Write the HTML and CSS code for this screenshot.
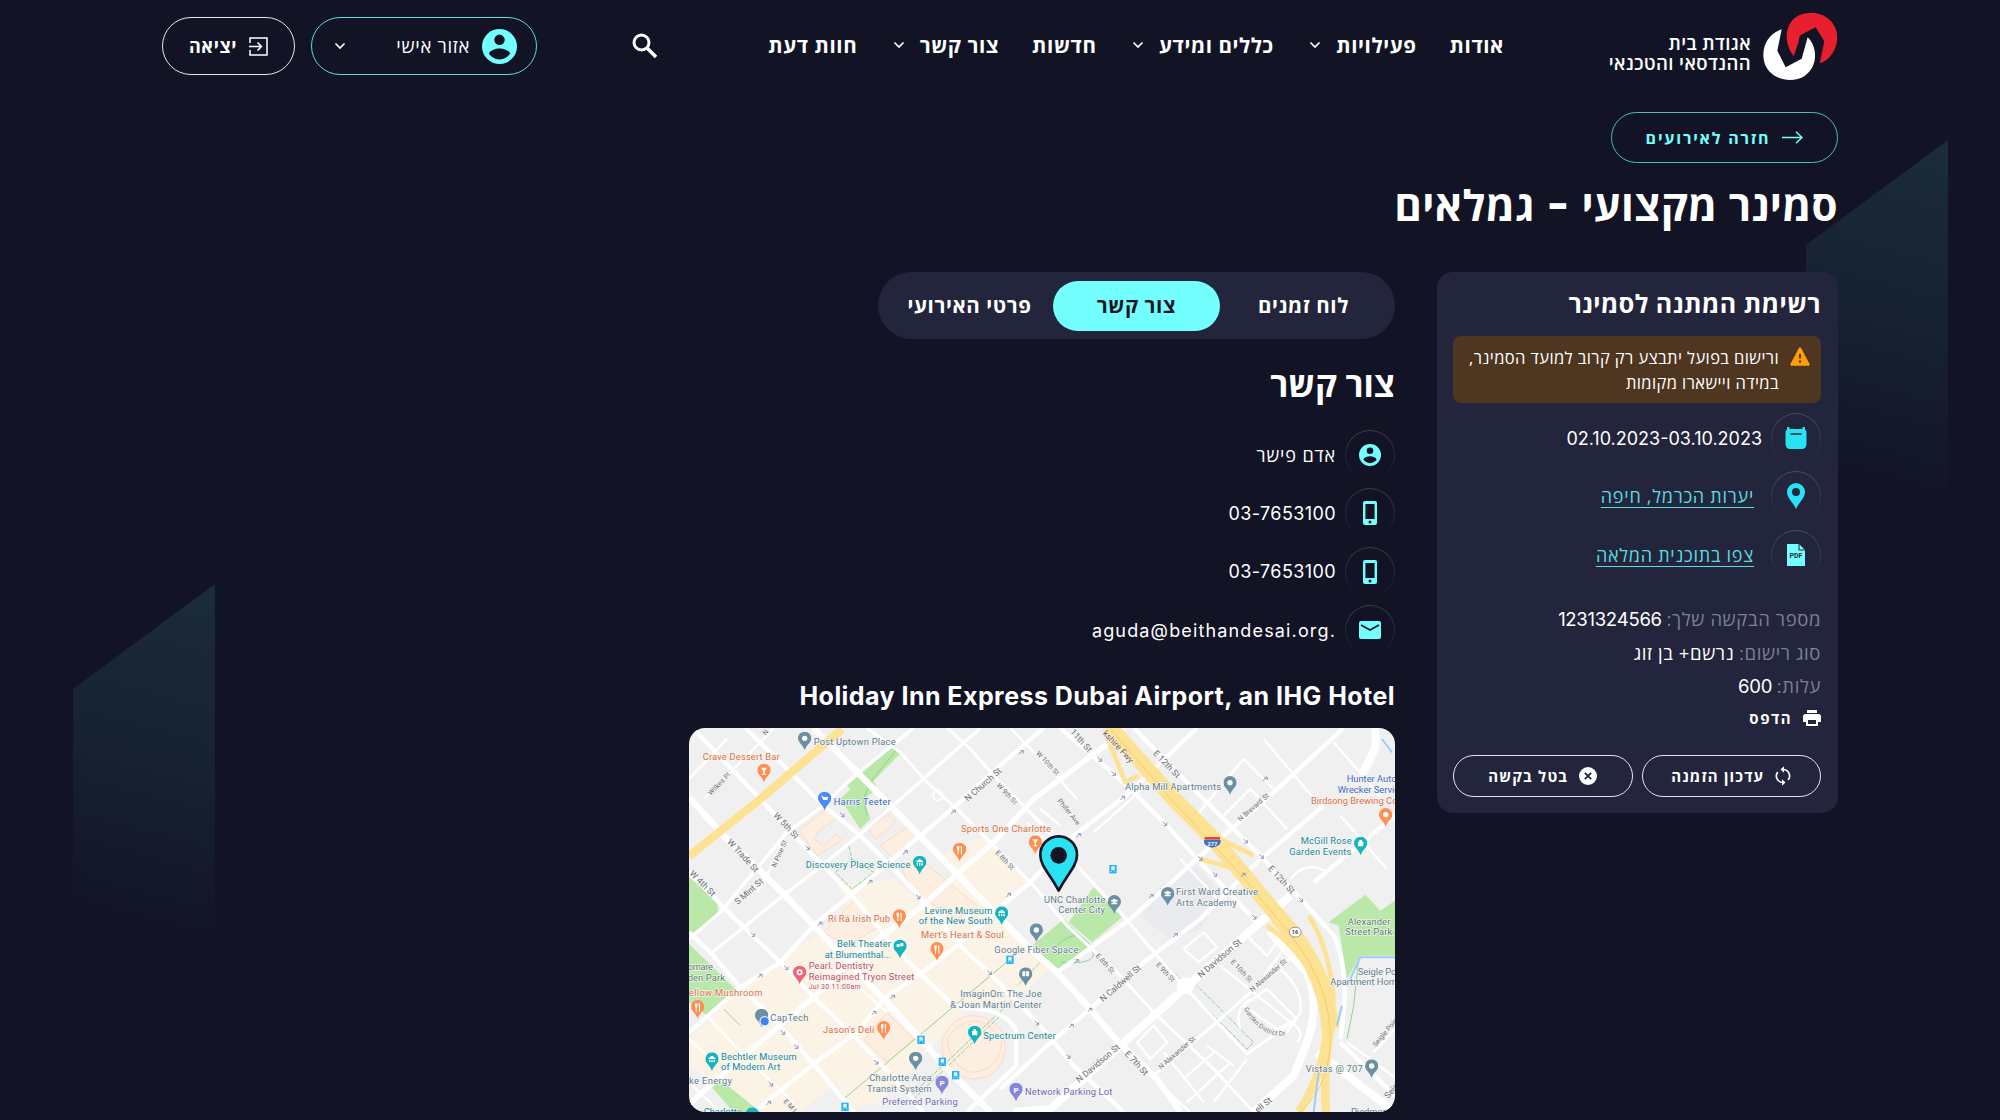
FILE: index.html
```html
<!DOCTYPE html>
<html lang="he" dir="rtl">
<head>
  <meta charset="UTF-8" />
  <title>סמינר מקצועי - גמלאים</title>
  <link rel="stylesheet" href="styles.css">
</head>
<body>

  <svg class="sprite" width="0" height="0">
    <symbol id="user" viewBox="2 2 20 20"><path fill-rule="evenodd" d="M12 2a10 10 0 1 0 0 20 10 10 0 0 0 0-20zm0 3.2a3 3 0 1 1 0 6 3 3 0 0 1 0-6zm0 14.2c-2.5 0-4.7-1.3-6-3.2.03-2 4-3.1 6-3.1s5.970 1.100 6 3.100c-1.300 1.900-3.500 3.200-6 3.200z"/></symbol>
    <symbol id="chev" viewBox="0 0 10 6"><path d="M1 1l4 4 4-4" fill="none" stroke="currentColor" stroke-width="1.7" stroke-linecap="round"/></symbol>
    <symbol id="phone" viewBox="0 0 14 24"><path fill-rule="evenodd" d="M2 0h10a2 2 0 0 1 2 2v20a2 2 0 0 1-2 2H2a2 2 0 0 1-2-2V2a2 2 0 0 1 2-2zm.4 3v15h9.200V3zM7 19.600a1.500 1.500 0 1 0 0 3 1.500 1.500 0 0 0 0-3z"/></symbol>
    <symbol id="pin" viewBox="0 0 40 56"><path d="M20 0a20 20 0 0 0-20 20c0 13 13 17 20 36 7-19 20-23 20-36A20 20 0 0 0 20 0z"/></symbol>
  </svg>

  <svg class="shape shape-right" viewBox="0 0 142 375">
    <defs>
      <linearGradient id="fade" x1="0.6" y1="0" x2="0.5" y2="1">
        <stop offset="0" stop-color="#1b2b38"/>
        <stop offset="0.45" stop-color="#172231"/>
        <stop offset="0.92" stop-color="#121426"/>
      </linearGradient>
    </defs>
    <path d="M0 105L142 0v375H0z" fill="url(#fade)"/>
  </svg>
  <svg class="shape shape-left" viewBox="0 0 142 375">
    <path d="M0 105L142 0v375H0z" fill="url(#fade)"/>
  </svg>

  <header class="header">
    <div class="logo">
      <svg width="75" height="69" viewBox="0 0 225 207">
        <path fill="#e71f2f" d="M170 154L184 88 158 46 111 70 104 98 92 132C60 92 64 32 108 10 150-10 205 8 220 55 230 95 210 142 170 154z"/>
        <path fill="#fff" d="M56 52L43 116 68 166 116 140 134 76C164 105 166 162 126 191 88 216 28 205 7 160-10 115 10 66 56 52z"/>
      </svg>
      <div class="logo-text">אגודת בית<br>ההנדסאי והטכנאי</div>
    </div>
    <nav class="nav">
      <a>אודות</a>
      <a>פעילויות <svg class="chev"><use href="#chev"/></svg></a>
      <a>כללים ומידע <svg class="chev"><use href="#chev"/></svg></a>
      <a>חדשות</a>
      <a>צור קשר <svg class="chev"><use href="#chev"/></svg></a>
      <a>חוות דעת</a>
    </nav>
    <svg class="search" width="26" height="26" viewBox="0 0 26 26" fill="none" stroke="#fff" stroke-width="3"><circle cx="9.500" cy="9.500" r="7.500"/><path d="M15 15l9 9" stroke-width="3.600"/></svg>
    <a class="account">
      <svg class="avatar"><use href="#user"/></svg>
      <span>אזור אישי</span>
      <svg class="chev"><use href="#chev"/></svg>
    </a>
    <a class="exit">
      <svg width="19" height="19" viewBox="0 0 19 19" fill="none" stroke="#fff" stroke-width="1.500"><path d="M1 6V1h17v17H1v-5M0 9.500h12M8.500 5.500l4 4-4 4"/></svg>
      <span>יציאה</span>
    </a>
  </header>

  <main class="page">
    <a class="back">
      <svg width="21" height="13" viewBox="0 0 21 13" fill="none" stroke="#73fffe" stroke-width="1.500"><path d="M0 6.500h20M14 .8l6 5.700-6 5.700"/></svg>
      <span>חזרה לאירועים</span>
    </a>
    <h1>סמינר מקצועי <span class="latin dash">-</span> גמלאים</h1>

    <div class="columns">
      <aside class="card">
        <h2>רשימת המתנה לסמינר</h2>
        <div class="warning">
          <svg width="20" height="19" viewBox="0 0 20 19"><path d="M10 1.500L18.500 17.500h-17z" fill="#ff9d0a" stroke="#ff9d0a" stroke-width="2.500" stroke-linejoin="round"/><path d="M10 7v4.500M10 13.500v2.200" stroke="#4e3620" stroke-width="2"/></svg>
          <p>ורישום בפועל יתבצע רק קרוב למועד הסמינר, במידה ויישארו מקומות</p>
        </div>
        <div class="row">
          <span class="circle"><svg width="22" height="22" viewBox="0 0 22 22"><path fill="#29e3f5" d="M2 0h2.500v2h13V0H20v2.500q1.500 1 1.500 3V17q0 5-5 5h-11q-5 0-5-5V5.500q0-2 1.500-3z"/><path d="M5.500 7h11" stroke="#22253b" stroke-width="1.500"/></svg></span>
          <bdi class="latin date">02.10.2023-03.10.2023</bdi>
        </div>
        <div class="row link">
          <span class="circle"><svg width="18" height="26" viewBox="0 0 18 26"><path fill="#29e3f5" fill-rule="evenodd" d="M9 0a9 9 0 0 0-9 9c0 6 6 10 9 17 3-7 9-11 9-17a9 9 0 0 0-9-9zm0 5a4 4 0 1 1 0 8 4 4 0 0 1 0-8z"/></svg></span>
          <a>יערות הכרמל, חיפה</a>
        </div>
        <div class="row link">
          <span class="circle"><svg width="18" height="22" viewBox="0 0 18 22"><path fill="#73fffe" d="M0 0h12l6 6v16H0z"/><path d="M12 0v6h6" fill="none" stroke="#22253b"/><text x="9" y="14" class="pdf">PDF</text></svg></span>
          <a>צפו בתוכנית המלאה</a>
        </div>
        <dl class="info">
          <div><dt>מספר הבקשה שלך:</dt> <dd class="latin">1231324566</dd></div>
          <div><dt>סוג רישום:</dt> <dd>נרשם+ בן זוג</dd></div>
          <div><dt>עלות:</dt> <dd class="latin">600</dd></div>
        </dl>
        <a class="print">
          <svg width="18" height="16" viewBox="0 0 18 16" fill="#fff"><path d="M4 0h10v3H4z"/><path fill-rule="evenodd" d="M2.500 4h13A2.500 2.500 0 0 1 18 6.500V12h-3v4H3v-4H0V6.500A2.500 2.500 0 0 1 2.500 4zM5 10v4h8v-4z"/></svg>
          <span>הדפס</span>
        </a>
        <div class="actions">
          <a><svg width="16" height="20" viewBox="0 0 16 20" fill="none" stroke="#fff" stroke-width="1.700"><path d="M8 3.500a6.500 6.500 0 0 1 5.200 10.500M8 16.500A6.500 6.500 0 0 1 2.800 6"/><path d="M9 .3v6.400L5.500 3.500zM7 13.300v6.400l3.500-3.200z" fill="#fff" stroke="none"/></svg><span>עדכון הזמנה</span></a>
          <a><svg width="18" height="18" viewBox="0 0 18 18"><circle cx="9" cy="9" r="9" fill="#fff"/><path d="M5.800 5.800l6.400 6.400M12.200 5.800l-6.400 6.400" stroke="#22253b" stroke-width="1.800"/></svg><span>בטל בקשה</span></a>
        </div>
      </aside>

      <section class="content">
        <div class="tabs">
          <a>לוח זמנים</a>
          <a class="active">צור קשר</a>
          <a>פרטי האירועי</a>
        </div>
        <h2>צור קשר</h2>
        <div class="contacts">
          <div class="row"><span class="circle"><svg width="22" height="22"><use href="#user"/></svg></span><span class="name">אדם פישר</span></div>
          <div class="row"><span class="circle"><svg width="14" height="24"><use href="#phone"/></svg></span><bdi class="latin tel">03-7653100</bdi></div>
          <div class="row"><span class="circle"><svg width="14" height="24"><use href="#phone"/></svg></span><bdi class="latin tel">03-7653100</bdi></div>
          <div class="row"><span class="circle"><svg width="22" height="18" viewBox="0 0 22 18"><rect width="22" height="18" rx="2"/><path d="M2 4l9 5 9-5" fill="none" stroke="#131527" stroke-width="1.800"/></svg></span><bdi class="latin mail" dir="ltr">aguda@beithandesai.org.</bdi></div>
        </div>
        <h3 dir="ltr">Holiday Inn Express Dubai Airport, an IHG Hotel</h3>

        <svg class="map" direction="ltr" viewBox="26 27 2118 1152">
          <rect x="26" y="27" width="2118" height="1152" fill="#f0f0f1"/>
          <!-- business areas -->
          <g fill="#fbf3e6">
            <path d="M790 400L900 355 950 385 1050 490 950 580 1040 690 1110 750 1000 850 850 880 600 1150 500 1170 470 1090 360 1179 240 1179 26 1040V960L180 810 330 700 420 640 560 500 700 570 830 465z"/>
            <path d="M470 500L640 480 830 640 700 760 560 640z"/>
          </g>
          <g fill="#fdeee2" stroke="#fbdcc4" stroke-width="3">
            <path d="M355 335L440 270 470 300 415 335 400 360 430 380 470 345 485 365 410 410z"/>
            <path d="M565 330L620 285 645 305 630 325 585 360z"/>
            <path d="M600 380L680 325 720 360 640 420z"/>
            <path d="M660 440L720 420 890 560 830 600 700 520z"/>
            <path d="M430 640L520 545 600 620 500 680z"/>
            <path d="M550 960L620 880 700 960 620 1030z"/>
            <circle cx="880" cy="985" r="95"/>
            <path d="M800 960q80-110 165 0-5 90-85 100-70-10-80-100z" fill="none"/>
          </g>
          <path d="M1440 500l110-60 70 80-60 110-90 30-90-70z" fill="#e9ebef"/>
          <!-- parks -->
          <g fill="#b9e8a8">
            <path d="M26 475L110 540 114 590 26 650z"/>
            <path d="M26 675L170 815 80 890 26 850z"/>
            <path d="M640 78L665 98 580 185 590 210 550 240 570 300 540 330 480 240 510 210 500 200z"/>
            <path d="M1240 505L1325 595 1235 670 1165 610z"/>
            <path d="M1150 600L1235 680 1130 760 1055 680z"/>
            <path d="M2055 527L2100 575 2144 545V710H2040L2000 780 1975 620 1945 610z"/>
            <path d="M90 1100L130 1090 240 1179H160z"/>
          </g>
          <g fill="none" stroke="#94d094" stroke-width="3">
            <path d="M505 380l10 40 65 40-65 50-50-50 50-40M1430 710l70 70M1530 820l170 170 20-20-170-170M670 1150l330-310M700 1140l260-250 M1090 720l-80 80" stroke-dasharray="14 4"/>
            <path d="M1130 680q60-60 100 0t-90 50M490 1140L990 720M2000 960l20-100 15-140"/>
            <path d="M650 90l-80 100-20 50 10 50M180 920l-50-50"/>
          </g>
          <!-- minor streets -->
          <g fill="none" stroke="#fff" stroke-width="7" stroke-linejoin="round">
            <path d="M26 180L140 60M70 240L250 60 280 27M990 27L1110 150 1190 240M1040 310l50 50M1060 290l60 50M1080 270l60 50M1240 340L1420 180"/>
            <path d="M1500 420l120 130M1630 290l80-80 110 120M1540 300l150-180 90 90M1750 60l160 190M1960 70L2100 230M1980 290l140 160M1830 480q50-60 110-20"/>
            <path d="M1510 690l60-50 40 45-55 45zM1370 970l50-50 40 50-50 50zM1700 650l60 60 30-40-30-30M1690 860l70-50 90 90-60 30zM1680 930q-20-60 30-90M1600 1000l-90 80M1450 1000l120 150M1520 1150l130-120"/>
            <path d="M1620 740L1830 910q50 30 20 60M1800 750q70 60 60 130l-40 60M1840 650l-90 120M1400 1060l130 120M1580 980l80 60M2000 970l150 110M2080 1000l64-70M620 880l-90-80"/>
            <path d="M320 330L270 450 230 520M26 1090L120 1179M80 890L200 1020 340 1150M26 960L80 1010M1600 1150L1700 1020"/>
          </g>
          <!-- streets -->
          <g fill="none" stroke="#fff" stroke-width="13" stroke-linejoin="round">
            <path d="M40 30L240 240 380 390 515 530 640 680 720 765 820 860 930 875Q1000 900 1008 940V1040L860 1179"/>
            <path d="M195 27L330 160 430 260 535 345 640 450 715 530 850 690 930 765 1070 910 1180 1040 1330 1179"/>
            <path d="M560 27L660 100 740 190 830 270 930 370 1060 500 1160 620 1310 760 1420 880 1600 1050 1720 1179" stroke-width="9"/>
            <path d="M800 27L870 90 950 180 1050 280 1190 440 1320 580 1430 710 1510 800 1700 1005 1850 900" stroke-width="9"/>
            <path d="M1140 27L1340 200 1460 320 1560 430 1740 620"/>
            <path d="M1360 27L1530 200 1660 330 1740 410 1880 560 1960 650Q1995 720 1993 850L1980 960"/>
            <path d="M26 460L165 600 300 730 400 835 530 960 680 1120 730 1179M26 640L90 700 180 805 290 910 400 1035 520 1179"/>
            <path d="M26 660L120 580 320 340 430 260 500 190 700 27M90 705L320 520 400 460 535 350 740 170 900 27" stroke-width="10"/>
            <path d="M26 940L180 805 300 730 410 610 515 525 720 350 820 265 970 130 1090 27"/>
            <path d="M26 1155L250 960 400 835 550 690 716 570 830 465 940 370 1060 240 1280 75 1330 27" stroke-width="16"/>
            <path d="M220 1179L400 1035 530 940 610 840 720 765 830 680 940 580 1050 490 1180 350 1330 235 1390 180 1550 27"/>
            <path d="M1130 760L1350 600 1440 520 1560 410 1780 220 1990 27M960 1110L1100 980 1230 870 1390 730 1560 600 1740 420 1930 260M1900 490L2144 290M1980 970L2144 1130" />
            <path d="M1420 1070L1620 900 1850 700" stroke-width="9"/>
          </g>
          <g fill="none" stroke="#fff" stroke-width="24" stroke-linejoin="round">
            <path d="M26 235L130 350 310 525 420 640 610 840 720 960 830 1080 930 1179M400 27L610 240 830 465 1050 690 1125 755 1230 870 1310 965 1430 1080 1500 1179" stroke-width="19"/>
            <path d="M1000 1179L1110 1170 1320 980 1510 810 1740 610 1830 530M1720 1179L1840 1070 1880 970Q1920 860 1880 760L1770 640M1910 1000L2144 1179M2085 27v60l-40 80" />
            <circle cx="1515" cy="800" r="14"/>
          </g>
          <!-- highways -->
          <g fill="none" stroke="#fde293" stroke-linejoin="round">
            <path d="M26 412L240 240 485 30" stroke-width="25"/>
            <path d="M1285 20L1480 240 1590 350 1680 455 1800 600" stroke-width="48"/>
            <path d="M1790 590Q1940 750 1949 930" stroke-width="52"/>
            <path d="M1940 900Q1940 1050 1855 1179M1955 900Q1925 1060 1938 1179" stroke-width="25"/>
            <path d="M1760 620Q1870 700 1920 820M1885 590Q1950 690 1960 850M1275 40l60 150 40-20M1340 60l60 70M1600 350l120 60M1560 420l90 25" stroke-width="14"/>
          </g>
          <path d="M1290 30L1480 250 1680 465 1800 610Q1940 770 1949 930T1860 1179" fill="none" stroke="#f5ce68" stroke-width="3"/>
          <path d="M2144 715H2040L2000 800M1985 860l-15 60M1915 1060l-15 119M2105 60l30 40" fill="none" stroke="#9ccdfb" stroke-width="6"/>
          <circle cx="773" cy="229" r="15" fill="none" stroke="#fff" stroke-width="5"/>

          <!-- street names -->
          <g class="street">
            <text transform="translate(92 230) rotate(-46)" font-size="21">Wilkes Pl</text>
            <text transform="translate(278 290) rotate(47)">W 5th St</text>
            <text transform="translate(139 370) rotate(47)">W Trade St</text>
            <text transform="translate(26 465) rotate(45)">W 4th St</text>
            <text transform="translate(172 558) rotate(-41)">S Mint St</text>
            <text transform="translate(286 446) rotate(-66)" font-size="21">N Pine St</text>
            <text transform="translate(862 248) rotate(-41)">N Church St</text>
            <text transform="translate(948 200) rotate(47)" font-size="21">W 9th St</text>
            <text transform="translate(1066 104) rotate(47)" font-size="21">W 10th St</text>
            <text transform="translate(944 402) rotate(47)" font-size="21">E 8th St</text>
            <text transform="translate(1130 246) rotate(51)" font-size="21">Phifer Ave</text>
            <text transform="translate(1168 40) rotate(48)">11th St</text>
            <text transform="translate(1417 104) rotate(46)">E 12th St</text>
            <text transform="translate(1762 450) rotate(47)">E 12th St</text>
            <text transform="translate(1266 44) rotate(47)" fill="#7a5230">kshire Fwy</text>
            <text transform="translate(1680 308) rotate(-41)" font-size="21">N Brevard St</text>
            <text transform="translate(1245 712) rotate(47)" font-size="21">E 8th St</text>
            <text transform="translate(1426 738) rotate(47)" font-size="21">E 9th St</text>
            <text transform="translate(1650 730) rotate(47)" font-size="21">E 10th St</text>
            <text transform="translate(1268 850) rotate(-41)">N Caldwell St</text>
            <text transform="translate(1562 778) rotate(-41)">N Davidson St</text>
            <text transform="translate(1196 1092) rotate(-40)">N Davidson St</text>
            <text transform="translate(1716 820) rotate(-41)" font-size="21">N Alexander St</text>
            <text transform="translate(1442 1052) rotate(-41)" font-size="21">N Alexander St</text>
            <text transform="translate(1332 1006) rotate(47)">E 7th St</text>
            <path id="garden" d="M1690 870Q1750 970 1835 945" fill="none" stroke="none"/>
            <text font-size="20"><textPath href="#garden">Garden District Dr</textPath></text>
            <text transform="translate(2086 985) rotate(-50)" font-size="21">Seigle Point</text>
            <text transform="translate(2124 1140) rotate(-50)">Seigle</text>
            <text transform="translate(1732 1182) rotate(-38)">ell St</text>
            <text transform="translate(308 1148) rotate(47)" font-size="21">E M L</text>
            <text transform="translate(256 50) rotate(-50)" font-size="21">N</text>
          </g>

          <!-- places -->
          <g class="place">
            <g fill="#5f7d8f">
              <text x="400" y="77" textLength="246">Post Uptown Place</text>
              <text x="1334" y="212" textLength="288">Alpha Mill Apartments</text>
              <text x="1091" y="551" textLength="184">UNC Charlotte</text>
              <text x="1134" y="583" textLength="140">Center City</text>
              <text x="1487" y="528" textLength="246">First Ward Creative</text>
              <text x="1487" y="560" textLength="182">Arts Academy</text>
              <text x="942" y="702" textLength="252">Google Fiber Space</text>
              <text x="840" y="834" textLength="244">ImaginOn: The Joe</text>
              <text x="810" y="866" textLength="274">&amp; Joan Martin Center</text>
              <text x="270" y="907" textLength="114">CapTech</text>
              <text x="26" y="1095" textLength="129">ke Energy</text>
              <text x="567" y="1086" textLength="187">Charlotte Area</text>
              <text x="560" y="1118" textLength="194">Transit System</text>
              <text x="2032" y="767">Seigle Point</text>
              <text x="1950" y="799">Apartment Homes</text>
              <text x="1876" y="1059" textLength="171">Vistas @ 707</text>
              <text x="2012" y="1188">Piedmont</text>
            </g>
            <g fill="#4f7f5c">
              <text x="22" y="753" textLength="76">omare</text>
              <text x="22" y="785" textLength="112">den Park</text>
              <text x="2002" y="617" textLength="128">Alexander</text>
              <text x="1995" y="649" textLength="141">Street Park</text>
            </g>
            <g fill="#df6f42">
              <text x="67" y="122" textLength="231">Crave Dessert Bar</text>
              <text x="842" y="338" textLength="270">Sports One Charlotte</text>
              <text x="443" y="609" textLength="187">Rí Rá Irish Pub</text>
              <text x="722" y="658" textLength="248">Mert's Heart &amp; Soul</text>
              <text x="26" y="831" textLength="220">ellow Mushroom</text>
              <text x="428" y="943" textLength="154">Jason's Deli</text>
              <text x="1892" y="255">Birdsong Brewing Co</text>
            </g>
            <g fill="#168b95">
              <text x="376" y="447" textLength="314">Discovery Place Science</text>
              <text x="733" y="584" textLength="203">Levine Museum</text>
              <text x="715" y="616" textLength="222">of the New South</text>
              <text x="470" y="684" textLength="162">Belk Theater</text>
              <text x="433" y="716" textLength="199">at Blumenthal...</text>
              <text x="122" y="1022" textLength="227">Bechtler Museum</text>
              <text x="122" y="1054" textLength="178">of Modern Art</text>
              <text x="909" y="960" textLength="217">Spectrum Center</text>
              <text x="1861" y="376" textLength="153">McGill Rose</text>
              <text x="1827" y="408" textLength="186">Garden Events</text>
              <text x="70" y="1188">Charlotte</text>
            </g>
            <g fill="#3b67c4">
              <text x="460" y="257" textLength="171">Harris Teeter</text>
              <text x="1999" y="190">Hunter Auto</text>
              <text x="1972" y="222">Wrecker Service</text>
            </g>
            <g fill="#c4506a">
              <text x="385" y="751" textLength="195">Pearl. Dentistry</text>
              <text x="385" y="783" textLength="317">Reimagined Tryon Street</text>
              <text x="385" y="809" font-size="21" textLength="156">Jul 30 11:00am</text>
            </g>
            <g fill="#6d6bb8">
              <text x="606" y="1158" textLength="226">Preferred Parking</text>
              <text x="1034" y="1129" textLength="262">Network Parking Lot</text>
            </g>
          </g>

          <!-- place pins -->
          <g fill="#6b8fa3">
            <use href="#pin" x="353" y="38" width="40" height="56"/>
            <use href="#pin" x="1629" y="171" width="40" height="56"/>
            <use href="#pin" x="1442" y="504" width="40" height="56"/>
            <use href="#pin" x="1282" y="528" width="40" height="56"/>
            <use href="#pin" x="1048" y="613" width="40" height="56"/>
            <use href="#pin" x="1016" y="745" width="40" height="56"/>
            <use href="#pin" x="224" y="869" width="40" height="56"/>
            <use href="#pin" x="686" y="998" width="40" height="56"/>
            <use href="#pin" x="2054" y="1021" width="40" height="56"/>
          </g>
          <g fill="#ff8f50">
            <use href="#pin" x="231" y="134" width="40" height="56"/>
            <use href="#pin" x="818" y="371" width="40" height="56"/>
            <use href="#pin" x="1045" y="349" width="40" height="56"/>
            <use href="#pin" x="637" y="571" width="40" height="56"/>
            <use href="#pin" x="750" y="669" width="40" height="56"/>
            <use href="#pin" x="32" y="843" width="40" height="56"/>
            <use href="#pin" x="590" y="906" width="40" height="56"/>
            <use href="#pin" x="2096" y="267" width="40" height="56"/>
          </g>
          <g fill="#12b5c0">
            <use href="#pin" x="698" y="410" width="40" height="56"/>
            <use href="#pin" x="944" y="562" width="40" height="56"/>
            <use href="#pin" x="639" y="662" width="40" height="56"/>
            <use href="#pin" x="75" y="1000" width="40" height="56"/>
            <use href="#pin" x="863" y="920" width="40" height="56"/>
            <use href="#pin" x="2021" y="353" width="40" height="56"/>
            <use href="#pin" x="196" y="1165" width="40" height="56"/>
          </g>
          <use href="#pin" x="413" y="218" width="40" height="56" fill="#4a8df6"/>
          <use href="#pin" x="338" y="740" width="40" height="56" fill="#f0647a"/>
          <g fill="#8486dc">
            <use href="#pin" x="765" y="1070" width="40" height="56"/>
            <use href="#pin" x="987" y="1091" width="40" height="56"/>
          </g>
          <g fill="#fff">
            <circle cx="373" cy="58" r="8"/><circle cx="1649" cy="191" r="8"/><circle cx="1068" cy="633" r="8"/><circle cx="706" cy="1018" r="8"/><circle cx="2074" cy="1041" r="8"/><circle cx="2116" cy="287" r="8"/>
            <path d="M1450 521l12-6 12 6-12 6zM1453 527h18v5h-18zM1290 545l12-6 12 6-12 6zM1293 551h18v5h-18zM1026 757h9v15h-9zM1037 757h9v15h-9z"/>
            <path d="M242 146h18l-7 9v9h4v3h-12v-3h4v-9zM1056 361h18l-7 9v9h4v3h-12v-3h4v-9z"/>
            <path id="fork" d="M830 381h7v10l-2 3v12h-3v-12l-2-3zM841 381h4v25h-3z"/>
            <use href="#fork" x="-181" y="200"/><use href="#fork" x="-68" y="298"/><use href="#fork" x="-786" y="472"/><use href="#fork" x="-228" y="535"/>
            <path id="museum" d="M708 427l10-7 10 7v3h-20zM709 432h4v8h-4zM716 432h4v8h-4zM723 432h4v8h-4z"/>
            <use href="#museum" x="246" y="152"/><use href="#museum" x="-623" y="590"/>
            <path d="M649 675h9v9h-9zM660 672h9v10h-9zM875 936h16v13h-16zM879 931h8v5h-8zM2033 368h16v14h-16zM2037 363h8v5h-8zM423 230h4l2 4h15l-3 9h-12z"/>
            <circle cx="358" cy="760" r="9"/>
          </g>
          <path d="M358 755v10M353 760h10" stroke="#f0647a" stroke-width="3"/>
          <text x="785" y="1100" class="parking">P</text>
          <text x="1007" y="1121" class="parking">P</text>
          <circle cx="253" cy="907" r="14" fill="#3b82f6" stroke="#e5edfb" stroke-width="4"/>
          <!-- tram stops -->
          <g fill="#1fb3f5">
            <path id="stop" d="M1287 438h22v25h-22z"/>
            <use href="#stop" x="-309" y="272"/><use href="#stop" x="-576" y="512"/><use href="#stop" x="-512" y="578"/><use href="#stop" x="-472" y="618"/><use href="#stop" x="-804" y="713"/>
          </g>
          <g stroke="#fff" stroke-width="2" fill="#d6f1fd">
            <path id="tram" d="M1294 443h8v9h-8zM1294 455l-2 4M1302 455l2 4"/>
            <use href="#tram" x="-309" y="272"/><use href="#tram" x="-576" y="512"/><use href="#tram" x="-512" y="578"/><use href="#tram" x="-472" y="618"/><use href="#tram" x="-804" y="713"/>
          </g>
          <!-- one-way arrows -->
          <g fill="none" stroke="#9391bd" stroke-width="3">
            <path id="ne" d="M668 405l12-10m-8 0h9v8"/>
            <use href="#ne" x="-106" y="89"/><use href="#ne" x="144" y="-121"/><use href="#ne" x="348" y="-300"/><use href="#ne" x="310" y="128"/><use href="#ne" x="520" y="-51"/><use href="#ne" x="652" y="-163"/><use href="#ne" x="1080" y="-220"/><use href="#ne" x="738" y="132"/><use href="#ne" x="1014" y="68"/><use href="#ne" x="-436" y="371"/><use href="#ne" x="-38" y="434"/><use href="#ne" x="-94" y="482"/><use href="#ne" x="810" y="249"/><use href="#ne" x="514" y="327"/><use href="#ne" x="554" y="473"/><use href="#ne" x="498" y="521"/><use href="#ne" x="-410" y="752"/><use href="#ne" x="-256" y="215"/>
            <path id="se" d="M375 380l12 11m-9 1h9v-9"/>
            <use href="#se" x="104" y="-99"/><use href="#se" x="332" y="147"/><use href="#se" x="876" y="-265"/><use href="#se" x="918" y="-223"/><use href="#se" x="1072" y="-72"/><use href="#se" x="1178" y="32"/><use href="#se" x="1222" y="80"/><use href="#se" x="1340" y="208"/><use href="#se" x="1314" y="-20"/><use href="#se" x="1362" y="26"/><use href="#se" x="1480" y="156"/><use href="#se" x="-64" y="360"/><use href="#se" x="-164" y="260"/><use href="#se" x="-74" y="554"/><use href="#se" x="-34" y="596"/><use href="#se" x="206" y="643"/><use href="#se" x="546" y="375"/><use href="#se" x="688" y="526"/><use href="#se" x="782" y="626"/><use href="#se" x="-110" y="709"/>
          </g>
          <!-- road shields -->
          <path d="M1573 354h46v8h-46z" fill="#d9483b"/>
          <path d="M1571 363h50q3 18-25 23-28-5-25-23z" fill="#3f6fc0"/>
          <text x="1596" y="380" class="shield white">277</text>
          <rect x="1827" y="625" width="35" height="29" rx="14" fill="#fff" stroke="#666" stroke-width="2"/>
          <text x="1844" y="646" class="shield">16</text>
          <!-- venue marker -->
          <path d="M1135 352a55 55 0 0 0-55 57c0 32 32 60 55 106 23-46 55-74 55-106a55 55 0 0 0-55-57z" fill="#29e3f5" stroke="#131527" stroke-width="8" stroke-linejoin="round"/>
          <circle cx="1135" cy="409" r="25" fill="#131527"/>
        </svg>
      </section>
    </div>
  </main>

</body>
</html>
```

FILE: styles.css
```css
* {
  box-sizing: border-box;
}
body {
  margin: 0;
  height: 1120px;
  overflow: hidden;
  position: relative;
  background-color: #121426;
  color: #fff;
  font-family: "Open Sans", "Noto Sans", sans-serif;
}
h1, h2, h3, p, dl, dd {
  margin: 0;
}
.latin {
  font-family: Inter, "Open Sans", sans-serif;
}
.sprite {
  position: absolute;
}
.shape {
  position: absolute;
  width: 142px;
  height: 375px;
}
.shape-right {
  left: 1806px;
  top: 140px;
}
.shape-left {
  left: 73px;
  top: 584px;
}

/* header */
.header {
  position: relative;
  display: flex;
  align-items: center;
  height: 92px;
  padding: 0 162px;
}
.logo {
  display: flex;
  align-items: center;
  gap: 12px;
  width: 230px;
}
.logo-text {
  font-size: 18.5px;
  line-height: 19.5px;
  font-weight: 600;
  letter-spacing: 0.4px;
  white-space: nowrap;
  padding-top: 13px;
}
.nav {
  display: flex;
  gap: 33px;
  width: 734px;
  margin-right: 104px;
  font-size: 20.5px;
  font-weight: 700;
  letter-spacing: 0.6px;
  white-space: nowrap;
}
.nav a {
  display: flex;
  align-items: center;
  gap: 16px;
  margin-top: -2px;
}
.nav .chev {
  margin-left: 3.5px;
}
.chev {
  width: 10px;
  height: 6px;
}
.search {
  margin-right: 112px;
}
.account {
  display: flex;
  align-items: center;
  width: 226px;
  height: 58px;
  margin-right: auto;
  padding: 0 19px 0 23px;
  border: 1px solid #5fd9dc;
  border-radius: 29px;
  font-size: 18.5px;
}
.account span {
  margin: -2px 12px 0 0;
  letter-spacing: 0.7px;
}
.account .chev {
  margin-right: auto;
}
.avatar {
  width: 35px;
  height: 35px;
  fill: #73fffe;
}
.exit {
  display: flex;
  align-items: center;
  justify-content: center;
  gap: 12px;
  width: 133px;
  height: 58px;
  margin-right: 16px;
  border: 1px solid #e4e5ea;
  border-radius: 29px;
  font-size: 18px;
  font-weight: 700;
  letter-spacing: 0.6px;
}

/* page */
.page {
  position: relative;
  padding: 20px 162px 0;
}
.back {
  display: flex;
  align-items: center;
  justify-content: center;
  gap: 12px;
  width: 227px;
  height: 51px;
  border: 1px solid #4fb9be;
  border-radius: 26px;
  color: #73fffe;
  font-size: 16px;
  font-weight: 700;
  letter-spacing: 1.8px;
}
h1 {
  margin-top: 14px;
  font-size: 42px;
  line-height: 56px;
  font-weight: 700;
  letter-spacing: 0.4px;
}
.dash {
  font-size: 50px;
  line-height: 1;
}
.columns {
  display: flex;
  align-items: flex-start;
  gap: 42px;
  margin-top: 39px;
}
.card {
  width: 401px;
  height: 541px;
  padding: 13px 17px 0 16px;
  background-color: #22253b;
  border-radius: 16px;
}
.card h2 {
  font-size: 25px;
  line-height: 36px;
  font-weight: 700;
  letter-spacing: 0.5px;
}
.warning {
  display: flex;
  gap: 11px;
  height: 67px;
  margin-top: 15px;
  padding: 9px 11px;
  background-color: #4e3620;
  border-radius: 8px;
  font-size: 16.5px;
  line-height: 25px;
  letter-spacing: 0.4px;
}
.warning svg {
  flex: none;
  margin-top: 2px;
}
.warning p {
  width: 320px;
  flex: none;
}
.row {
  display: flex;
  align-items: center;
  gap: 9px;
  margin-bottom: 8.4px;
  font-size: 18px;
}
.card .row:nth-of-type(2) {
  margin-top: 10px;
}
.link {
  gap: 17px;
}
.link a {
  color: #5cdbe0;
  letter-spacing: 0.75px;
  text-decoration: underline;
  text-underline-offset: 4px;
}
.name {
  letter-spacing: 0.9px;
}
.tel {
  letter-spacing: 0.4px;
}
.mail {
  letter-spacing: 1.15px;
}
.circle {
  display: flex;
  align-items: center;
  justify-content: center;
  width: 50px;
  height: 50px;
  border: 1px solid transparent;
  border-radius: 50%;
  background: linear-gradient(#22253b, #22253b) padding-box, linear-gradient(#494b5e, #22253b) border-box;
}
.pdf {
  font: bold 7px Roboto, sans-serif;
  text-anchor: middle;
  direction: ltr;
  fill: #22253b;
}
.info {
  margin-top: 22px;
  font-size: 18.5px;
  line-height: 33.3px;
}
.info dt, .info dd {
  display: inline;
  letter-spacing: 0.6px;
}
.info dt {
  color: #7e8092;
}
.info .latin {
  letter-spacing: -0.3px;
}
.print {
  display: flex;
  align-items: center;
  gap: 11px;
  height: 28px;
  font-size: 15px;
  font-weight: 700;
  letter-spacing: 1.5px;
}
.actions {
  display: flex;
  gap: 9px;
  margin-top: 23px;
}
.actions a {
  flex: 1;
  display: flex;
  align-items: center;
  justify-content: center;
  gap: 11px;
  height: 42px;
  border: 1px solid #e4e5ea;
  border-radius: 21px;
  font-size: 15px;
  font-weight: 700;
  letter-spacing: 1.2px;
}

/* content */
.content {
  width: 706px;
}
.tabs {
  display: flex;
  align-items: center;
  width: 517px;
  height: 67px;
  padding: 0 8px;
  background-color: #22253b;
  border-radius: 34px;
  font-size: 20.5px;
  font-weight: 700;
  letter-spacing: 0.6px;
}
.tabs a {
  width: 167px;
  height: 50px;
  line-height: 48px;
  border-radius: 25px;
  text-align: center;
}
.tabs .active {
  background-color: #73fffe;
  color: #131527;
}
.content h2 {
  margin: 21px 0 22px;
  font-size: 34px;
  line-height: 48px;
  font-weight: 700;
}
.contacts {
  fill: #73fffe;
}
.contacts .circle {
  background: linear-gradient(#121426, #121426) padding-box, linear-gradient(#3c3d4c, #121426) border-box;
}
.content h3 {
  margin: 25px 0 16px;
  font-family: Inter, sans-serif;
  font-size: 25px;
  line-height: 32px;
  font-weight: 700;
  letter-spacing: 0.45px;
  text-align: right;
  white-space: nowrap;
}
.map {
  display: block;
  width: 706px;
  height: 384px;
  border-radius: 16px;
}
.map text {
  font-family: Roboto, sans-serif;
}
.street {
  font-size: 26px;
  fill: #6c6f73;
}
.place {
  font-size: 28px;
}
.place text, .street text {
  paint-order: stroke;
  stroke: #f6f6f4;
  stroke-width: 4px;
}
.parking, .shield {
  text-anchor: middle;
  font-size: 24px;
  font-weight: 700;
  fill: #fff;
}
.shield {
  font-size: 17px;
  fill: #444;
}
.white {
  fill: #fff;
}
```
